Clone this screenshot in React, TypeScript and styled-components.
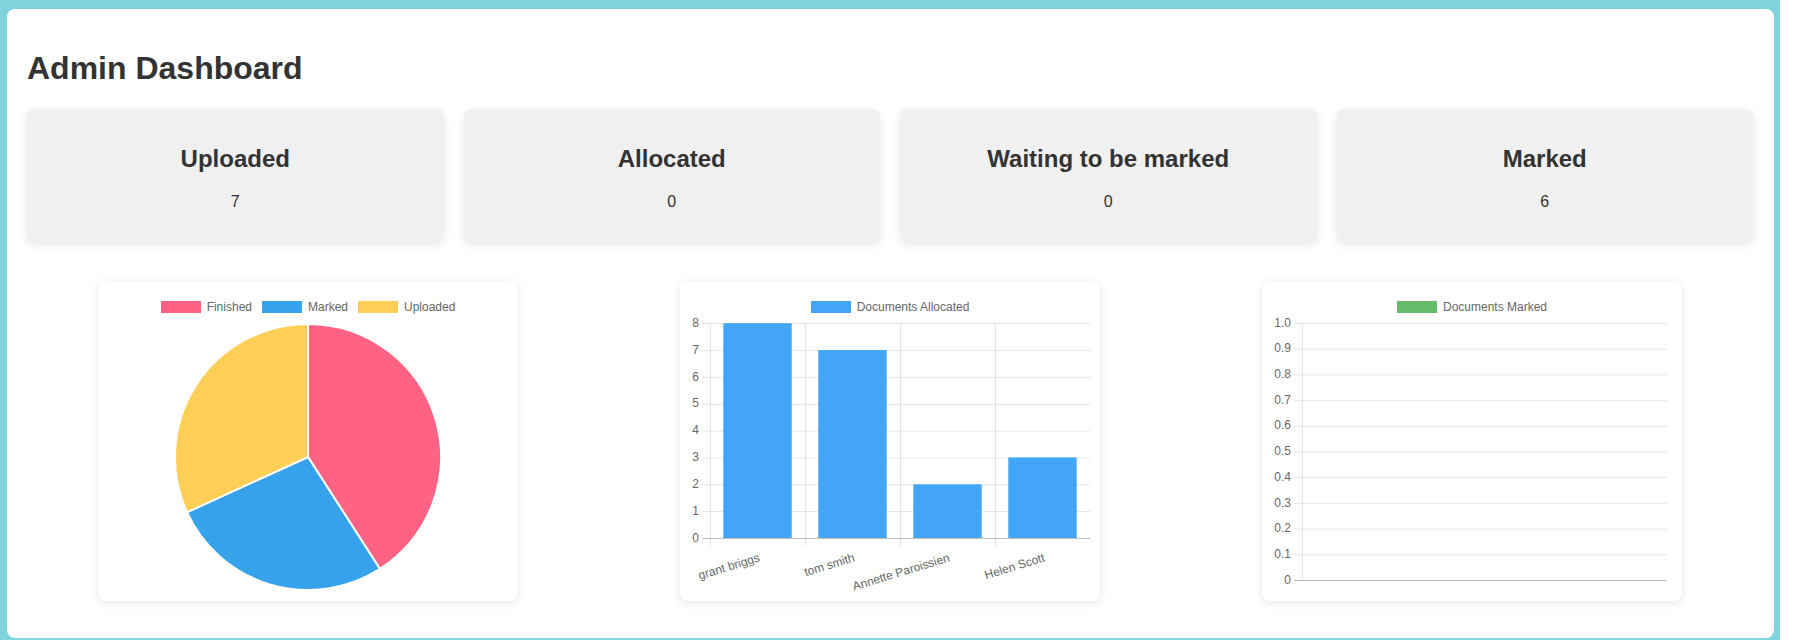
import styled, { createGlobalStyle } from "styled-components";

const GlobalStyle = createGlobalStyle`
    body {
        margin: 0;
        background: #ffffff;
        font-family: "Liberation Sans", Arial, sans-serif;
        color: #333333;
    }
`;

const Frame = styled.div`
    width: 1780px;
    box-sizing: border-box;
    background-color: #7fd3dc;
    padding: 9px 6px 12px 7px;
`;

const Panel = styled.main`
    background-color: #ffffff;
    border-radius: 8px;
    padding: 20px 21px 20px 20px;
    min-height: 629px;
    box-sizing: border-box;
`;

const Title = styled.h1`
    font-size: 32px;
    font-weight: bold;
    margin: 0.67em 0;
    color: #333333;
`;

const StatGrid = styled.section`
    display: grid;
    grid-template-columns: repeat(4, 1fr);
    gap: 20px;
`;

const StatCard = styled.div`
    background-color: #f0f0f0;
    border-radius: 8px;
    padding: 16px;
    text-align: center;
    box-shadow: 0 2px 8px rgba(0, 0, 0, 0.1);
`;

const StatLabel = styled.h2`
    font-size: 24px;
    font-weight: bold;
    margin: 0.83em 0;
    color: #333333;
`;

const StatValue = styled.p`
    font-size: 16px;
    margin: 1em 0;
    color: #333333;
`;

const ChartRow = styled.section`
    display: flex;
    justify-content: space-between;
    padding: 0 71px;
    margin-top: 38px;
`;

const ChartCard = styled.div`
    width: 420px;
    height: 320px;
    box-sizing: border-box;
    padding: 10px;
    background-color: #ffffff;
    border-radius: 8px;
    box-shadow: 0 2px 10px rgba(0, 0, 0, 0.1);
`;

const Legend = styled.div`
    display: flex;
    justify-content: center;
    gap: 10px;
    padding: 10px 0;
`;

const LegendItem = styled.div`
    display: flex;
    align-items: center;
    font-size: 12px;
    line-height: 12px;
    color: #666666;
`;

const Swatch = styled.span<{ $color: string }>`
    display: block;
    width: 40px;
    height: 12px;
    margin-right: 6px;
    background-color: ${(p) => p.$color};
`;

const Plot = styled.svg`
    display: block;
    overflow: visible;
    font-family: "Liberation Sans", Arial, sans-serif;
    font-size: 12px;
`;

const stats = [
    { label: "Uploaded", value: 7 },
    { label: "Allocated", value: 0 },
    { label: "Waiting to be marked", value: 0 },
    { label: "Marked", value: 6 },
];

const pieData = [
    { label: "Finished", value: 9, color: "#ff6384" },
    { label: "Marked", value: 6, color: "#36a2eb" },
    { label: "Uploaded", value: 7, color: "#ffce56" },
];

const allocated = [
    { name: "grant briggs", value: 8 },
    { name: "tom smith", value: 7 },
    { name: "Annette Paroissien", value: 2 },
    { name: "Helen Scott", value: 3 },
];

const GRID = "rgba(0,0,0,0.1)";
const AXIS = "rgba(0,0,0,0.25)";
const TICK = "#666666";

function slicePath(cx: number, cy: number, r: number, a0: number, a1: number) {
    const x0 = cx + r * Math.cos(a0);
    const y0 = cy + r * Math.sin(a0);
    const x1 = cx + r * Math.cos(a1);
    const y1 = cy + r * Math.sin(a1);
    const large = a1 - a0 > Math.PI ? 1 : 0;
    return `M${cx},${cy} L${x0},${y0} A${r},${r} 0 ${large} 1 ${x1},${y1} Z`;
}

function PieChart() {
    const total = pieData.reduce((s, d) => s + d.value, 0);
    let angle = -Math.PI / 2;
    return (
        <Plot width={400} height={268}>
            {pieData.map((d) => {
                const a0 = angle;
                angle += (d.value / total) * Math.PI * 2;
                return (
                    <path
                        key={d.label}
                        d={slicePath(200, 134, 133, a0, angle)}
                        fill={d.color}
                        stroke="#ffffff"
                        strokeWidth={2}
                    />
                );
            })}
        </Plot>
    );
}

function BarChart() {
    const left = 20;
    const right = 400;
    const bottom = 215;
    const step = 26.85;
    const catW = (right - left) / allocated.length;
    return (
        <Plot width={400} height={268}>
            {[0, 1, 2, 3, 4, 5, 6, 7, 8].map((v) => {
                const y = bottom - v * step + 0.5;
                return (
                    <g key={v}>
                        <line x1={12} x2={right} y1={y} y2={y} stroke={v === 0 ? AXIS : GRID} />
                        <text x={9} y={y} textAnchor="end" dominantBaseline="middle" fill={TICK}>
                            {v}
                        </text>
                    </g>
                );
            })}
            {allocated.map((d, i) => {
                const x = left + i * catW + 0.5;
                return <line key={d.name} x1={x} x2={x} y1={0} y2={bottom + 8} stroke={GRID} />;
            })}
            {allocated.map((d, i) => {
                const cx = left + catW * (i + 0.5);
                const w = catW * 0.72;
                const h = d.value * step;
                return <rect key={d.name} x={cx - w / 2} y={bottom - h} width={w} height={h} fill="#42a5f5" />;
            })}
            {allocated.map((d, i) => {
                const cx = left + catW * (i + 0.5) + 2;
                const y = 235;
                return (
                    <text
                        key={d.name}
                        x={cx}
                        y={y}
                        textAnchor="end"
                        dominantBaseline="middle"
                        fill={TICK}
                        transform={`rotate(-17 ${cx} ${y})`}
                    >
                        {d.name}
                    </text>
                );
            })}
        </Plot>
    );
}

function EmptyChart() {
    const left = 30;
    const right = 395;
    const bottom = 257;
    const step = 25.7;
    const ticks = [0, 1, 2, 3, 4, 5, 6, 7, 8, 9, 10];
    return (
        <Plot width={400} height={268}>
            {ticks.map((t) => {
                const y = bottom - t * step + 0.5;
                const label = t === 0 ? "0" : t === 10 ? "1.0" : `0.${t}`;
                return (
                    <g key={t}>
                        <line x1={22} x2={right} y1={y} y2={y} stroke={t === 0 ? AXIS : GRID} />
                        <text x={19} y={y} textAnchor="end" dominantBaseline="middle" fill={TICK}>
                            {label}
                        </text>
                    </g>
                );
            })}
            <line x1={left + 0.5} x2={left + 0.5} y1={0} y2={bottom} stroke={GRID} />
        </Plot>
    );
}

export default function App() {
    return (
        <>
            <GlobalStyle />
            <Frame>
                <Panel>
                    <Title>Admin Dashboard</Title>
                    <StatGrid>
                        {stats.map((s) => (
                            <StatCard key={s.label}>
                                <StatLabel>{s.label}</StatLabel>
                                <StatValue>{s.value}</StatValue>
                            </StatCard>
                        ))}
                    </StatGrid>
                    <ChartRow>
                        <ChartCard>
                            <Legend>
                                {pieData.map((d) => (
                                    <LegendItem key={d.label}>
                                        <Swatch $color={d.color} />
                                        {d.label}
                                    </LegendItem>
                                ))}
                            </Legend>
                            <PieChart />
                        </ChartCard>
                        <ChartCard>
                            <Legend>
                                <LegendItem>
                                    <Swatch $color="#42a5f5" />
                                    Documents Allocated
                                </LegendItem>
                            </Legend>
                            <BarChart />
                        </ChartCard>
                        <ChartCard>
                            <Legend>
                                <LegendItem>
                                    <Swatch $color="#66bb6a" />
                                    Documents Marked
                                </LegendItem>
                            </Legend>
                            <EmptyChart />
                        </ChartCard>
                    </ChartRow>
                </Panel>
            </Frame>
        </>
    );
}
